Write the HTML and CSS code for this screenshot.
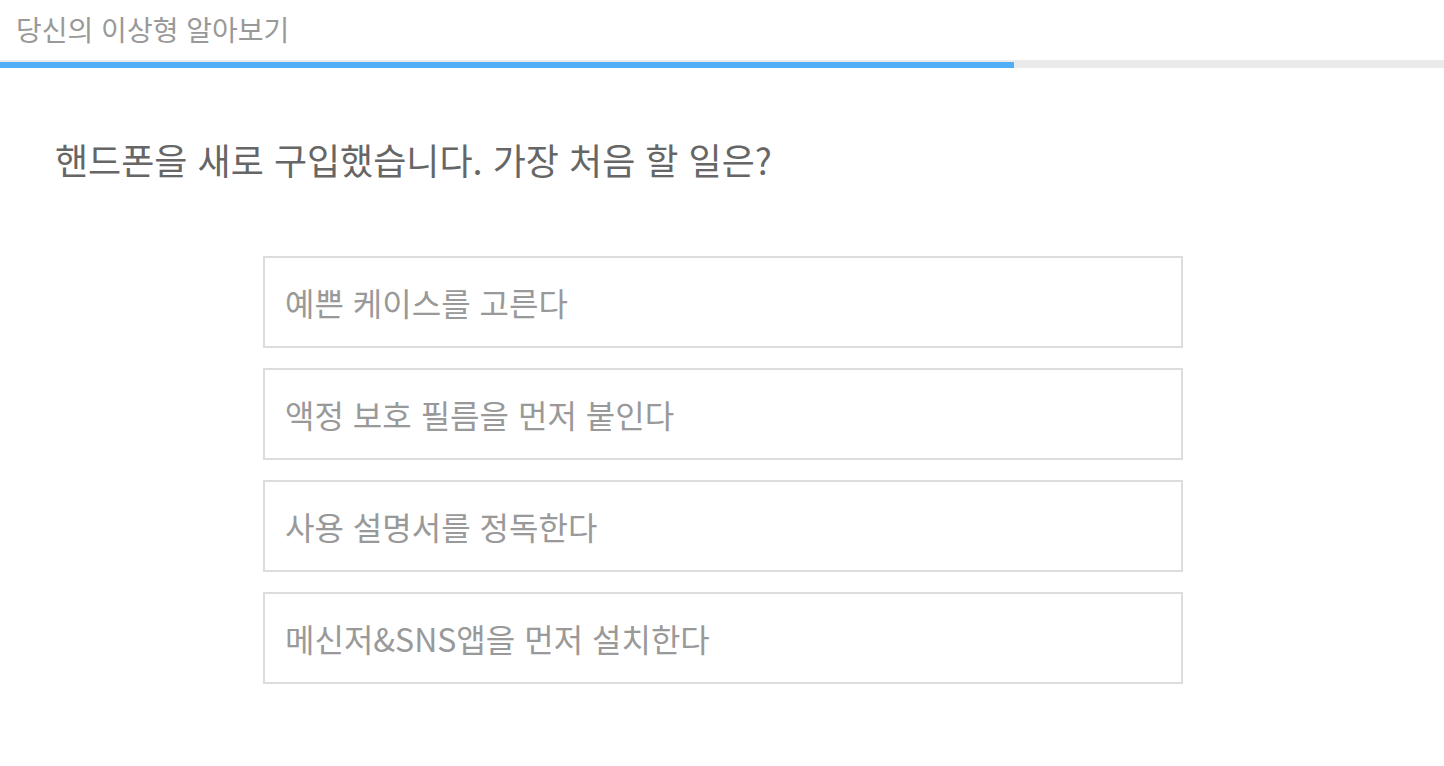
FILE: index.html
```html
<!DOCTYPE html>
<html lang="ko">
<head>
<meta charset="utf-8">
<title>당신의 이상형 알아보기</title>
<link rel="stylesheet" href="styles.css">
</head>
<body>
<header class="header">당신의 이상형 알아보기</header>
<div class="progress"><div class="progress-fill" style="width: 1014px"></div></div>
<main class="main">
  <h1 class="question">핸드폰을 새로 구입했습니다. 가장 처음 할 일은?</h1>
  <ul class="options">
    <li class="option">예쁜 케이스를 고른다</li>
    <li class="option">액정 보호 필름을 먼저 붙인다</li>
    <li class="option">사용 설명서를 정독한다</li>
    <li class="option">메신저&amp;SNS앱을 먼저 설치한다</li>
  </ul>
</main>
</body>
</html>
```
FILE: styles.css
```css
html, body {
  margin: 0;
  padding: 0;
  background: #fff;
  font-family: "Noto Sans CJK KR", "Noto Sans", sans-serif;
}
.header {
  height: 60px;
  line-height: 58px;
  padding-left: 16px;
  font-size: 28px;
  color: #999;
  box-sizing: border-box;
}
.progress {
  height: 8px;
  background: #eaeaea;
  display: flex;
  align-items: flex-end;
}
.progress-fill {
  height: 6px;
  background: #50aef6;
}
.main {
  padding: 66px 0 0;
}
.question {
  margin: 0 0 72px 55px;
  font-size: 36px;
  line-height: 50px;
  font-weight: 400;
  color: #666;
}
.options {
  list-style: none;
  margin: 0 0 0 263px;
  padding: 0;
  width: 920px;
  display: flex;
  flex-direction: column;
  gap: 20px;
}
.option {
  height: 92px;
  box-sizing: border-box;
  border: 2px solid #dddddd;
  padding-left: 20px;
  display: flex;
  align-items: center;
  font-size: 32px;
  color: #999;
}
```
